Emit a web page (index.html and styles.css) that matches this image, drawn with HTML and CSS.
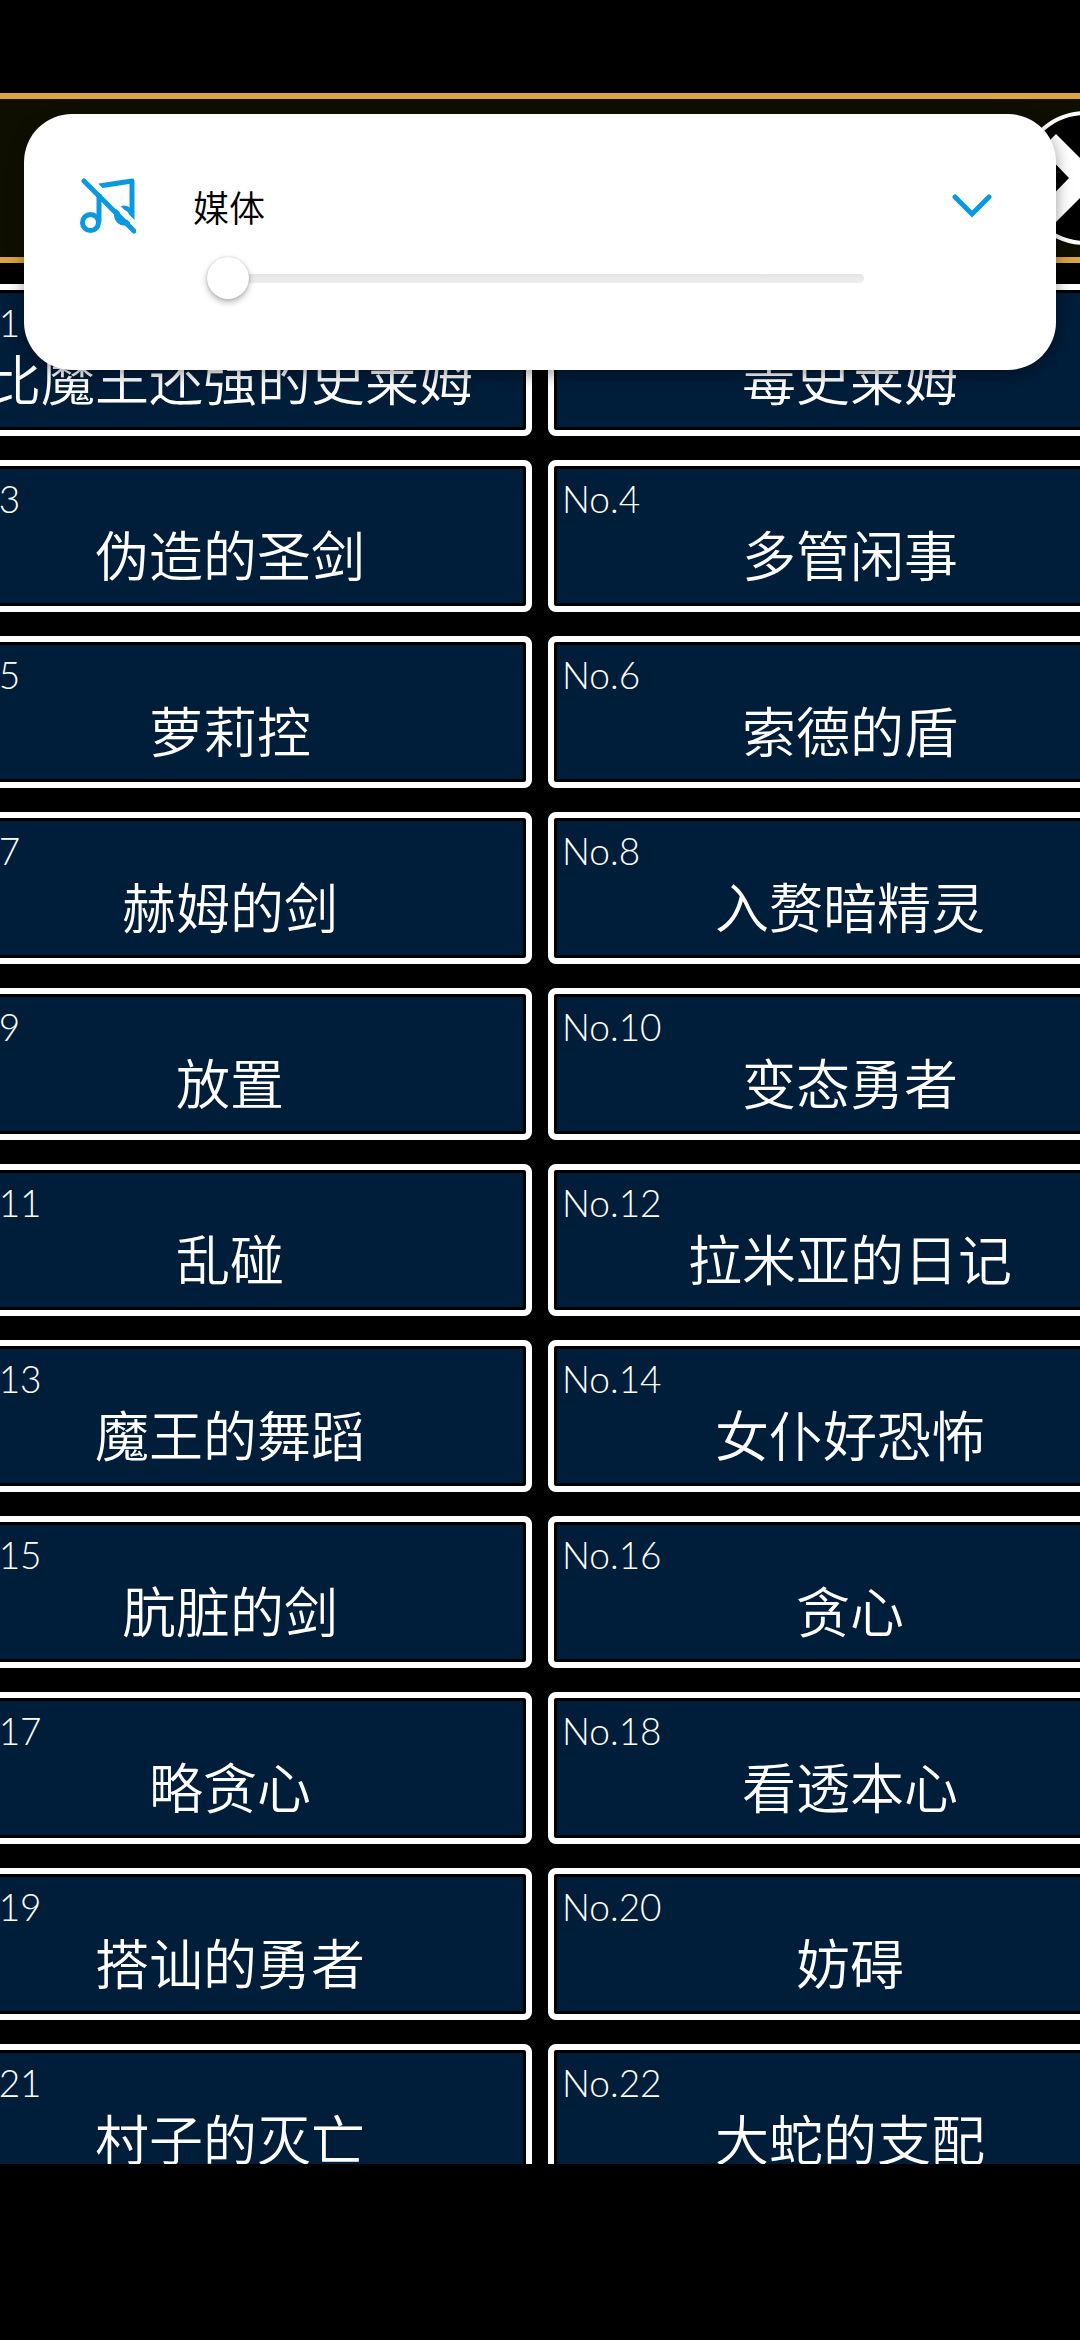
FILE: index.html
```html
<!DOCTYPE html>
<html lang="zh-Hans">
<head>
    <meta charset="UTF-8">
    <title>图鉴</title>
    <link rel="stylesheet" href="styles.css">
</head>
<body>
<main class="game">
    <header class="title-bar">
        <button class="next" type="button" aria-label="下一页">
            <svg viewBox="0 0 136 136"><circle cx="68" cy="68" r="65"/><path d="M38 24 82 68 38 112 23 97 51 68 23 39Z"/></svg>
        </button>
    </header>
    <div class="cards" id="cards"></div>
</main>

<section class="volume">
    <svg class="note" viewBox="0 0 56 56">
        <circle cx="10.5" cy="44.5" r="8"/>
        <circle cx="44" cy="37.5" r="7.5"/>
        <path d="M19 44V16M19 8 52 3V42"/>
        <path class="gap" d="M8 -1 59 50"/>
        <path class="slash" d="M4 3 54 53"/>
    </svg>
    <label class="volume-name" for="media">媒体</label>
    <button class="expand" type="button" aria-label="展开">
        <svg viewBox="0 0 40 24"><path d="M3 3 20 20 37 3"/></svg>
    </button>
    <input class="volume-slider" id="media" type="range" min="0" max="15" value="0">
</section>

<script>
    const names = [
        '比魔王还强的史莱姆', '毒史莱姆',
        '伪造的圣剑', '多管闲事',
        '萝莉控', '索德的盾',
        '赫姆的剑', '入赘暗精灵',
        '放置', '变态勇者',
        '乱碰', '拉米亚的日记',
        '魔王的舞蹈', '女仆好恐怖',
        '肮脏的剑', '贪心',
        '略贪心', '看透本心',
        '搭讪的勇者', '妨碍',
        '村子的灭亡', '大蛇的支配'
    ];

    const cards = document.getElementById('cards');
    names.forEach((name, i) => {
        const card = document.createElement('button');
        card.type = 'button';
        card.className = 'card';
        card.innerHTML = `<span class="no">No.${i + 1}</span><span class="name">${name}</span>`;
        cards.appendChild(card);
    });
</script>
</body>
</html>
```
FILE: styles.css
```css
* { box-sizing: border-box; }
html, body { height: 100%; }
body {
    margin: 0;
    padding: 93px 0 176px;
    background-color: #000;
    font-family: "Noto Sans CJK SC", sans-serif;
    overflow: hidden;
}
button { padding: 0; border: 0; background: none; font: inherit; }

.game { height: 100%; overflow: hidden; }

.title-bar {
    display: flex;
    justify-content: flex-end;
    align-items: center;
    height: 170px;
    border-top: 6px solid #d9a441;
    border-bottom: 6px solid #d9a441;
    background-color: #0f0f00;
}
.next { width: 136px; height: 136px; margin-right: -74px; }
.next svg { display: block; }
.next circle { fill: #000; stroke: #fff; stroke-width: 4; }
.next path { fill: #fff; }

/* the list is wider than the screen and runs off both sides */
.cards {
    display: grid;
    grid-template-columns: 1fr 1fr;
    gap: 24px 16px;
    margin: 21px -72px 0;
}
.card {
    display: flex;
    flex-direction: column;
    height: 152px;
    padding: 10px 8px 0;
    border: 6px solid #fff;
    border-radius: 8px;
    background-color: #001d3a;
    box-shadow: inset 0 0 0 3px #000;
    color: #fff;
    text-align: left;
}
.no { font: 300 37px/46px Lato, sans-serif; }
.name {
    align-self: center;
    font-family: "Noto Sans CJK SC DemiLight", "Noto Sans CJK SC", sans-serif;
    font-size: 54px;
    font-weight: 350;
    line-height: 64px;
}

.volume {
    position: absolute;
    top: 114px;
    left: 24px;
    right: 24px;
    display: grid;
    grid-template-columns: 56px 1fr 40px;
    grid-template-rows: 56px 42px;
    gap: 23px 57px;
    height: 256px;
    padding: 64px 64px 0 56px;
    border-radius: 48px;
    background-color: #fff;
    box-shadow: 0 4px 16px rgba(0, 0, 0, .4);
}
.note { width: 56px; height: 56px; fill: none; stroke: #0a99e0; stroke-width: 5; stroke-linejoin: round; }
.note .gap { stroke: #fff; }
.note .slash { stroke-linecap: round; }
.volume-name { font-size: 36px; font-weight: 350; line-height: 56px; color: #000; }
.expand svg { display: block; fill: none; stroke: #0a99e0; stroke-width: 5; stroke-linecap: round; }

.volume-slider {
    grid-column: 2;
    height: 42px;
    margin: 0 31px 0 14px;
    background: none;
    -webkit-appearance: none;
    appearance: none;
}
.volume-slider::-webkit-slider-runnable-track {
    height: 9px;
    border-radius: 5px;
    background: linear-gradient(#e4e4e4, #eee);
}
.volume-slider::-webkit-slider-thumb {
    -webkit-appearance: none;
    width: 42px;
    height: 42px;
    margin-top: -17px;
    border-radius: 50%;
    background-color: #fff;
    box-shadow: 0 3px 6px rgba(0, 0, 0, .3), 0 0 2px rgba(0, 0, 0, .2);
}
```
